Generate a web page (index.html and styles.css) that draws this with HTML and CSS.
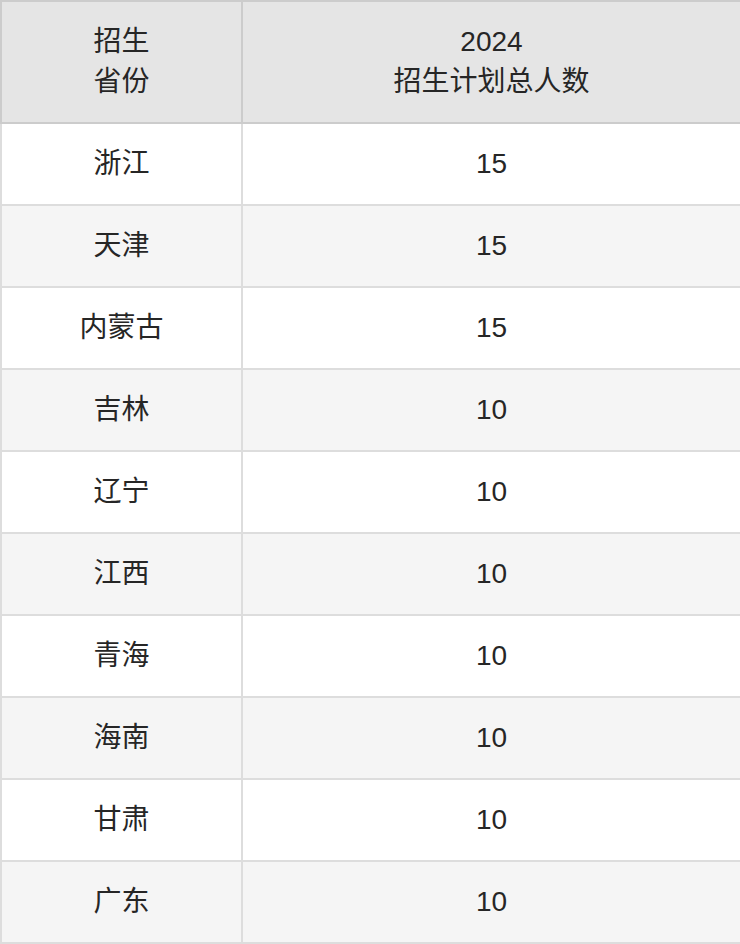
FILE: index.html
```html
<!DOCTYPE html>
<html lang="zh">
<head>
<meta charset="utf-8">
<link rel="stylesheet" href="styles.css">
</head>
<body>
<table class="plan">
  <colgroup><col class="c1"><col class="c2"></colgroup>
  <thead>
    <tr><th>招生<br>省份</th><th>2024<br>招生计划总人数</th></tr>
  </thead>
  <tbody>
    <tr><td>浙江</td><td>15</td></tr>
    <tr><td>天津</td><td>15</td></tr>
    <tr><td>内蒙古</td><td>15</td></tr>
    <tr><td>吉林</td><td>10</td></tr>
    <tr><td>辽宁</td><td>10</td></tr>
    <tr><td>江西</td><td>10</td></tr>
    <tr><td>青海</td><td>10</td></tr>
    <tr><td>海南</td><td>10</td></tr>
    <tr><td>甘肃</td><td>10</td></tr>
    <tr><td>广东</td><td>10</td></tr>
  </tbody>
</table>
</body>
</html>
```
FILE: styles.css
```css
html, body {
  margin: 0;
  padding: 0;
  background: #fff;
}
.plan {
  width: 740px;
  border-collapse: collapse;
  table-layout: fixed;
  font-family: "Liberation Sans", "Noto Sans CJK SC", sans-serif;
  font-size: 28px;
  line-height: 40px;
  color: #262626;
}
.plan .c1 { width: 241px; }
.plan .c2 { width: 499px; }
.plan th, .plan td {
  text-align: center;
  vertical-align: middle;
  padding: 20px 0;
}
.plan th {
  font-weight: normal;
  background: #e5e5e5;
  border: 2px solid #cccccc;
}
.plan td {
  border: 2px solid #dddddd;
}
.plan tbody tr:nth-child(even) td {
  background: #f5f5f5;
}
```
